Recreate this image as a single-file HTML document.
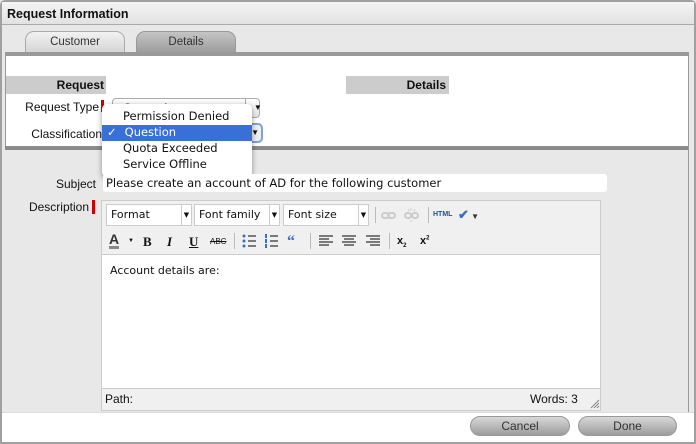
<!DOCTYPE html>
<html><head><style>
*{box-sizing:border-box;margin:0;padding:0}
body{width:696px;height:444px;background:#e8e8e8;font-family:"Liberation Sans",sans-serif;font-size:12px;color:#111;position:relative;overflow:hidden}
.abs{position:absolute}
.dv{font-family:"DejaVu Sans","Liberation Sans",sans-serif;font-size:11px}
</style></head><body>
<div class="abs" style="left:0;top:0;width:696px;height:444px;border:2px solid #a0a0a0;border-radius:5px 5px 0 0;background:#e8e8e8"></div>
<div class="abs" style="left:2px;top:2px;width:692px;height:23px;background:linear-gradient(#f4f4f4,#e2e2e2);border-bottom:1px solid #aaa"></div>
<div class="abs" style="left:7px;top:7px;font-weight:bold;font-size:12.5px">Request Information</div>
<div class="abs" style="left:25px;top:31px;width:100px;height:22px;border:1px solid #aaa;border-bottom:none;border-radius:9px 9px 0 0;background:linear-gradient(#f2f2f2,#d4d4d4);text-align:center;line-height:21px;font-size:11.5px;color:#333">Customer</div>
<div class="abs" style="left:136px;top:31px;width:100px;height:22px;border:1px solid #999;border-bottom:none;border-radius:9px 9px 0 0;background:linear-gradient(#c4c4c4,#9c9c9c);text-align:center;line-height:21px;font-size:11.5px;color:#333">Details</div>
<div class="abs" style="left:5px;top:52px;width:684px;height:4px;background:#999"></div>
<div class="abs" style="left:5px;top:56px;width:684px;height:90px;background:#fff;border-left:1px solid #999;border-right:1px solid #999"></div>
<div class="abs" style="left:5px;top:146px;width:683px;height:4px;background:#8a8a8a"></div>
<div class="abs" style="left:688px;top:56px;width:1px;height:356px;background:#999"></div>
<div class="abs" style="left:6px;top:76px;width:100px;height:18px;background:#ccc;text-align:right;font-weight:bold;line-height:18px;padding-right:2px">Request</div>
<div class="abs" style="left:346px;top:76px;width:103px;height:18px;background:#ccc;text-align:right;font-weight:bold;line-height:18px;padding-right:3px">Details</div>
<div class="abs" style="left:0;top:100px;width:99px;text-align:right">Request Type</div>
<div class="abs" style="left:101px;top:100px;width:3px;height:12px;background:#c00"></div>
<div class="abs" style="left:0;top:127px;width:102px;text-align:right;overflow:hidden;white-space:nowrap">Classification</div>
<div class="abs" style="left:112px;top:98px;width:148px;height:20px;border:1px solid #aaa;border-radius:4px;background:linear-gradient(#fff,#e6e6e6);padding-left:10px;line-height:18px" >Create Account <span style="float:right;border-left:1px solid #aaa;width:14px;text-align:center;font-size:8px">▲▼</span></div>
<div class="abs" style="left:110px;top:123px;width:153px;height:20px;border:2px solid #7aa4da;border-radius:5px;background:#eee"><span style="float:right;font-size:8px;margin-right:2px;line-height:16px">▲▼</span></div>
<div class="abs" style="left:102px;top:104px;width:150px;height:73px;background:#fff;border-radius:5px;box-shadow:0 2px 6px rgba(0,0,0,.4)"></div>
<div class="abs dv" style="left:123px;top:109px;font-size:11.5px">Permission Denied</div>
<div class="abs" style="left:102px;top:125px;width:150px;height:16px;background:#3a6fd8"></div>
<div class="abs dv" style="left:107px;top:125px;font-size:11.5px;color:#fff;font-weight:bold">✓ <span style="margin-left:4px;font-weight:normal">Question</span></div>
<div class="abs dv" style="left:123px;top:141px;font-size:11.5px">Quota Exceeded</div>
<div class="abs dv" style="left:123px;top:157px;font-size:11.5px">Service Offline</div>
<div class="abs" style="left:0;top:177px;width:96px;text-align:right">Subject</div>
<div class="abs dv" style="left:103px;top:174px;width:504px;height:18px;background:#fff;border-radius:3px;padding-left:3px;line-height:18px;font-size:11.5px">Please create an account of AD for the following customer</div>
<div class="abs" style="left:0;top:200px;width:89px;text-align:right">Description</div>
<div class="abs" style="left:92px;top:200px;width:3px;height:14px;background:#c00"></div>
<div class="abs" style="left:101px;top:200px;width:500px;height:211px;border:1px solid #ccc;background:#f0f0f0"></div>
<div class="abs dv" style="left:106px;top:204px;width:86px;height:22px;border:1px solid #ccc;background:#fff;line-height:20px;padding-left:4px">Format<span style="float:right;border-left:1px solid #ccc;width:10px;text-align:center;font-size:7px">▼</span></div>
<div class="abs dv" style="left:194px;top:204px;width:86px;height:22px;border:1px solid #ccc;background:#fff;line-height:20px;padding-left:4px">Font family<span style="float:right;border-left:1px solid #ccc;width:10px;text-align:center;font-size:7px">▼</span></div>
<div class="abs dv" style="left:283px;top:204px;width:86px;height:22px;border:1px solid #ccc;background:#fff;line-height:20px;padding-left:4px">Font size<span style="float:right;border-left:1px solid #ccc;width:10px;text-align:center;font-size:7px">▼</span></div>
<div class="abs" style="left:375px;top:207px;width:1px;height:16px;background:#bbb"></div>
<svg class="abs" style="left:380px;top:208px" width="44" height="14"><g fill="none" stroke="#ccc" stroke-width="2"><rect x="2" y="5" width="7" height="5" rx="2.5"/><rect x="8" y="5" width="7" height="5" rx="2.5"/><rect x="25" y="5" width="6" height="5" rx="2.5"/><rect x="32" y="5" width="6" height="5" rx="2.5"/><path d="M31 0v3M28 1l1 2M35 1l-1 2M31 12v2" stroke-width="1"/></g></svg>
<div class="abs" style="left:428px;top:207px;width:1px;height:16px;background:#bbb"></div>
<div class="abs" style="left:433px;top:211px;color:#1c4fa0;font-size:7px;font-weight:bold">HTML</div>
<div class="abs" style="left:458px;top:207px;color:#3a6fc0;font-size:13px;font-weight:bold">✔<span style="color:#333;font-size:8px"> ▼</span></div>
<div class="abs" style="left:109px;top:232px;font-weight:bold;font-size:14px;color:#333;border-bottom:3px solid #888;line-height:14px">A</div>
<div class="abs" style="left:128px;top:238px;font-size:6px">▼</div>
<div class="abs" style="left:143px;top:234px;font-family:'Liberation Serif',serif;font-weight:bold;font-size:13px">B</div>
<div class="abs" style="left:167px;top:234px;font-family:'Liberation Serif',serif;font-weight:bold;font-style:italic;font-size:13px">I</div>
<div class="abs" style="left:189px;top:234px;font-family:'Liberation Serif',serif;font-weight:bold;text-decoration:underline;font-size:13px">U</div>
<div class="abs" style="left:210px;top:237px;font-size:8px;text-decoration:line-through">ABC</div>
<div class="abs" style="left:234px;top:233px;width:1px;height:16px;background:#bbb"></div>
<svg class="abs" style="left:241px;top:234px" width="90" height="14"><g fill="#3a6fc0"><circle cx="3" cy="2" r="1.5"/><circle cx="3" cy="7" r="1.5"/><circle cx="3" cy="12" r="1.5"/><rect x="24" y="0" width="2" height="4"/><rect x="24" y="5" width="2" height="4"/><rect x="24" y="10" width="2" height="4"/><text x="46" y="12" font-size="16" font-weight="bold" font-family="Liberation Serif">“</text></g><g stroke="#333" stroke-width="1.3"><path d="M7 2h8M7 7h8M7 12h8M29 2h8M29 7h8M29 12h8"/></g></svg>
<div class="abs" style="left:310px;top:233px;width:1px;height:16px;background:#bbb"></div>
<svg class="abs" style="left:318px;top:235px" width="64" height="12"><g stroke="#333" stroke-width="1.2"><path d="M1 1h14M1 4h10M1 7h14M1 10h10M24 1h14M26 4h10M24 7h14M26 10h10M48 1h14M52 4h10M48 7h14M52 10h10"/></g></svg>
<div class="abs" style="left:389px;top:233px;width:1px;height:16px;background:#bbb"></div>
<div class="abs" style="left:397px;top:235px;font-weight:bold;font-size:11px">x<sub style="font-size:6px">2</sub></div>
<div class="abs" style="left:420px;top:235px;font-weight:bold;font-size:11px">x<sup style="font-size:6px">2</sup></div>
<div class="abs" style="left:102px;top:254px;width:498px;height:135px;background:#fff;border-top:1px solid #ccc;border-bottom:1px solid #ccc"></div>
<div class="abs dv" style="left:110px;top:264px">Account details are:</div>
<div class="abs" style="left:105px;top:392px">Path:</div>
<div class="abs" style="left:530px;top:392px">Words: 3</div>
<svg class="abs" style="left:590px;top:399px" width="10" height="10"><path d="M9 1L1 9M9 4L4 9M9 7L7 9" stroke="#888"/></svg>
<div class="abs" style="left:2px;top:412px;width:692px;height:30px;background:#fff;border-top:1px solid #ddd"></div>
<div class="abs" style="left:470px;top:416px;width:100px;height:20px;border-radius:10px;background:linear-gradient(#d8d8d8,#9c9c9c);border:1px solid #999;text-align:center;line-height:18px;color:#333">Cancel</div>
<div class="abs" style="left:578px;top:416px;width:99px;height:20px;border-radius:10px;background:linear-gradient(#d8d8d8,#9c9c9c);border:1px solid #999;text-align:center;line-height:18px;color:#333">Done</div>
</body></html>
